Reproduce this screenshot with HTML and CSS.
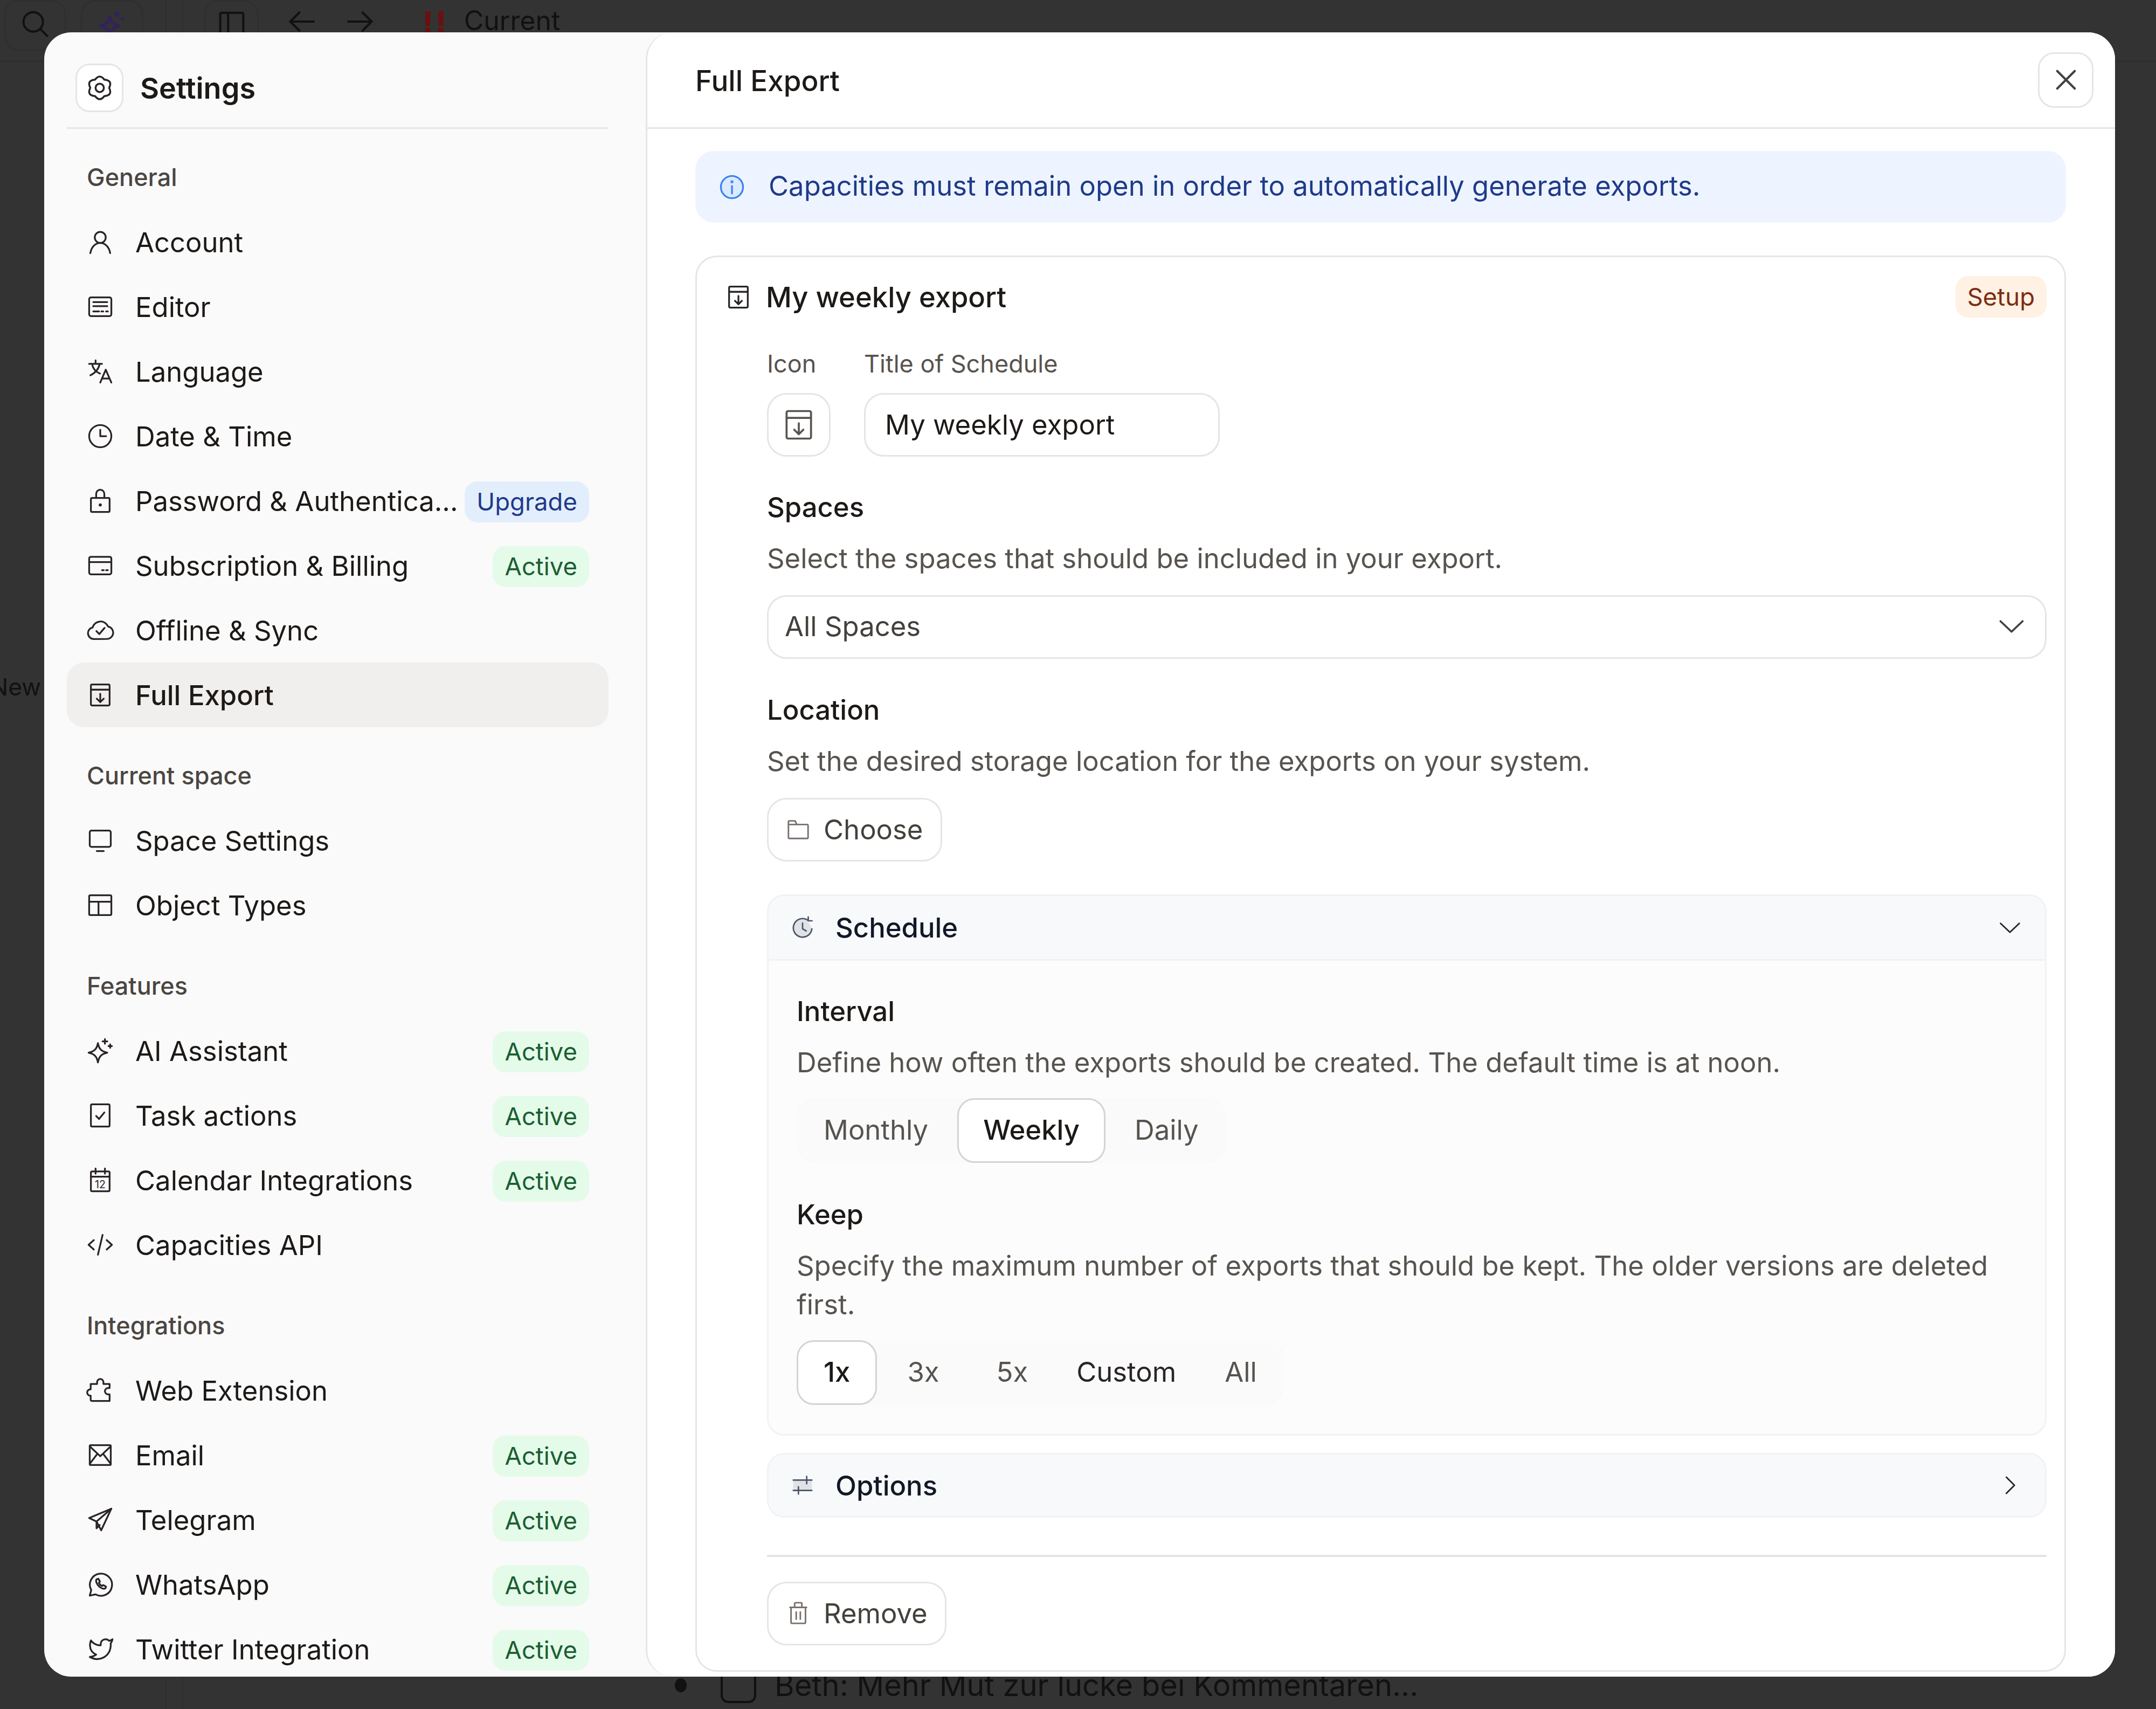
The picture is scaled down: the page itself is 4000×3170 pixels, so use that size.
FILE: index.html
```html
<!DOCTYPE html>
<html lang="en">
<head>
  <meta charset="UTF-8">
  <title>Settings - Full Export</title>
  <link rel="stylesheet" href="styles.css">
</head>
<body>

  <svg class="icon-defs" aria-hidden="true">
    <symbol id="i-gear" viewBox="0 0 24 24"><path d="M8.250 5.500Q12 .5 15.750 5.500Q22.400 6 19.500 12Q22.400 18 15.750 18.500Q12 23.500 8.250 18.500Q1.600 18 4.500 12Q1.600 6 8.250 5.500Z"/><circle cx="12" cy="12" r="3.300"/></symbol>
    <symbol id="i-user" viewBox="0 0 24 24"><circle cx="12" cy="8" r="4.700"/><path d="M3.500 21.500c.8-4.800 4-8.800 8.500-8.800s7.700 4 8.500 8.800"/></symbol>
    <symbol id="i-editor" viewBox="0 0 24 24"><rect x="2.500" y="4" width="19" height="16" rx="1.500"/><path d="M6 8h12M6 11.500h12M6 16h5M13 16h1.500M17 16h1.500"/></symbol>
    <symbol id="i-lang" viewBox="0 0 24 24"><path d="M2.500 5.500h11M8 2.500v3M5 5.500c.6 3.800 3.200 6.800 6.800 8.300M11.500 5.500c-.8 4.200-3.600 7.700-8 9.800M12 21.500l4.700-11 4.800 11M13.600 18h6.300"/></symbol>
    <symbol id="i-clock" viewBox="0 0 24 24"><circle cx="12" cy="12" r="9.500"/><path d="M12 6.500V12h5"/></symbol>
    <symbol id="i-lock" viewBox="0 0 24 24"><rect x="4" y="9.500" width="16" height="12" rx="1"/><path d="M8.500 9.500V6a3.500 3.500 0 0 1 7 0v3.500"/><circle cx="12" cy="15.500" r=".6"/></symbol>
    <symbol id="i-card" viewBox="0 0 24 24"><rect x="2.500" y="4.500" width="19" height="15" rx="1.500"/><path d="M2.500 9h19M13.500 16h1.500M17 16h1.500"/></symbol>
    <symbol id="i-cloud" viewBox="0 0 24 24"><path d="M6.500 19.500a5 5 0 0 1-1-9.900 7 7 0 0 1 13.200-.8 5.400 5.400 0 0 1-1 10.700Z"/><path d="M8.700 12.700l2.500 2.600 4.500-5.300"/></symbol>
    <symbol id="i-archive" viewBox="0 0 24 24"><path d="M4 7.500h16V20a1 1 0 0 1-1 1H5a1 1 0 0 1-1-1Z"/><path d="M5 3h14a1 1 0 0 1 1 1v3.500H4V4a1 1 0 0 1 1-1Z"/><path d="M12 11v7M9 15.200l3 3 3-3"/></symbol>
    <symbol id="i-monitor" viewBox="0 0 24 24"><rect x="3" y="3.500" width="18" height="14" rx="1.500"/><path d="M9 21h6"/></symbol>
    <symbol id="i-table" viewBox="0 0 24 24"><rect x="2.500" y="3.500" width="19" height="17" rx="1"/><path d="M2.500 9h19M10.500 9v11.500"/></symbol>
    <symbol id="i-spark" viewBox="0 0 24 24"><path d="M10 5.500c.9 4.900 3 7.200 8 8.200-5 1-7.100 3.300-8 8.300-.9-5-3-7.300-8-8.300 5-1 7.100-3.300 8-8.200Z"/><path d="M16 2v4M14 4h4M20.500 6.500v3M19 8h3"/></symbol>
    <symbol id="i-check" viewBox="0 0 24 24"><rect x="4" y="2.500" width="16" height="19" rx="1"/><path d="M8.500 12.500l2.500 2.500 4.500-5.500"/></symbol>
    <symbol id="i-calendar" viewBox="0 0 24 24"><rect x="4" y="4.500" width="16" height="17" rx="1"/><path d="M4 9h16M8 2v4.500M16 2v4.500"/></symbol>
    <symbol id="i-code" viewBox="0 0 24 24"><path d="M6.500 8L2 12l4.500 4M17.500 8l4.500 4-4.500 4M14 3.500l-4 17"/></symbol>
    <symbol id="i-puzzle" viewBox="0 0 24 24"><path d="M9.300 6.500V5a2.700 2.700 0 0 1 5.400 0v1.500H20V10h-1.300a2.700 2.700 0 0 0 0 5.400H20V21H4.800a1 1 0 0 1-1-1v-3.500H3.500a2.700 2.700 0 0 1 0-5.400h.3V6.500Z"/></symbol>
    <symbol id="i-mail" viewBox="0 0 24 24"><rect x="3" y="3.500" width="18" height="17" rx=".8"/><path d="M3 4.500l9 8.500 9-8.500M3 19.500l6.500-8.500M21 19.500L14.500 11"/></symbol>
    <symbol id="i-plane" viewBox="0 0 24 24"><path d="M21.500 2.500L2.500 10.500l6.300 3L12.800 21Z"/><path d="M21.500 2.500L8.800 13.500v5.800l2.700-2.800"/></symbol>
    <symbol id="i-whatsapp" viewBox="0 0 24 24"><path d="M3 21.500l1.300-4.700A9.500 9.500 0 1 1 8 20.500Z"/><path d="M9 7.500c-1.200 1-.3 3.900 1.700 5.900s4.700 2.900 5.800 1.800l.4-1.400-2.300-1.300-1.200.8c-1.100-.5-2-1.500-2.600-2.700l.9-1.100-1.300-2.400Z"/></symbol>
    <symbol id="i-twitter" viewBox="0 0 24 24"><path d="M22.500 3.500a10 10 0 0 1-2.800 1.400 4.200 4.200 0 0 0-7.300 2.800v1A10 10 0 0 1 4 4.500s-3.500 8.500 4.500 12.200a10.500 10.500 0 0 1-5.500 2c8 4.500 18 0 18-10.800a4 4 0 0 0-.1-.8 7 7 0 0 0 1.600-3.600Z"/></symbol>
    <symbol id="i-info" viewBox="0 0 24 24"><circle cx="12" cy="12" r="9.500"/><path d="M12 11v6.500"/><circle cx="12" cy="7.500" r=".5"/></symbol>
    <symbol id="i-close" viewBox="0 0 24 24"><path d="M4.500 4.500l15 15M19.500 4.500l-15 15"/></symbol>
    <symbol id="i-down" viewBox="0 0 24 24"><path d="M2.500 7.500L12 16.500l9.500-9"/></symbol>
    <symbol id="i-right" viewBox="0 0 24 24"><path d="M8 3l9 9-9 9"/></symbol>
    <symbol id="i-folder" viewBox="0 0 24 24"><path d="M2.500 5a1 1 0 0 1 1-1h5.500l1.500 3.500h10a1 1 0 0 1 1 1V20a1 1 0 0 1-1 1h-17a1 1 0 0 1-1-1Z"/><path d="M2.500 7.500h8"/></symbol>
    <symbol id="i-schedule" viewBox="0 0 24 24"><path class="soft" d="M20.500 12A9 9 0 1 1 17 4.900Z"/><path d="M21 13a9 9 0 1 1-4-8.500"/><path d="M17.500 1.500v3.700h3.700M12 7.500V13l3.500 2"/></symbol>
    <symbol id="i-sliders" viewBox="0 0 24 24"><rect class="soft" x="3" y="7" width="18" height="10"/><path d="M3 7h18M16 3.500v7M3 17h18M8 13.500v7"/></symbol>
    <symbol id="i-trash" viewBox="0 0 24 24"><path d="M5 6.500h14V21a1 1 0 0 1-1 1H6a1 1 0 0 1-1-1Z"/><path d="M4 6.500h16M8.500 6.500V3a1 1 0 0 1 1-1h5a1 1 0 0 1 1 1v3.500M10 11v7M14 11v7"/></symbol>
    <symbol id="i-search" viewBox="0 0 24 24"><circle cx="10.500" cy="10.500" r="8"/><path d="M16.500 16.500l6 6"/></symbol>
    <symbol id="i-panel" viewBox="0 0 24 24"><rect x="2.500" y="3" width="19" height="18" rx="1"/><path d="M9 3v18"/></symbol>
    <symbol id="i-back" viewBox="0 0 24 24"><path d="M22 12H2M10 4l-8 8 8 8"/></symbol>
    <symbol id="i-forward" viewBox="0 0 24 24"><path d="M2 12h20M14 4l8 8-8 8"/></symbol>
  </svg>

  <!-- app behind the dialog -->
  <div class="backdrop">
    <header class="back-toolbar">
      <div class="back-tool back-tool-search"><svg class="back-icon"><use href="#i-search"/></svg></div>
      <div class="back-tool back-tool-spark"><svg class="back-icon back-icon-purple"><use href="#i-spark"/></svg></div>
      <div class="back-sep"></div>
      <div class="back-tool back-tool-panel"><svg class="back-icon"><use href="#i-panel"/></svg></div>
      <svg class="back-icon back-arrow"><use href="#i-back"/></svg>
      <svg class="back-icon back-arrow"><use href="#i-forward"/></svg>
      <span class="back-marks">!!</span>
      <span class="back-title">Current</span>
    </header>
    <div class="back-body">
      <aside class="back-rail"><span class="back-new">New</span></aside>
      <div class="back-gutter"></div>
      <div class="back-content">
        <div class="back-task">
          <span class="back-dot"></span>
          <span class="back-box"></span>
          <span class="back-text">Beth: Mehr Mut zur lücke bei Kommentaren...</span>
        </div>
      </div>
    </div>
  </div>

  <div class="modal">
    <aside class="sidebar">
      <div class="side-head">
        <span class="side-head-btn"><svg class="icon icon-gear"><use href="#i-gear"/></svg></span>
        <span class="side-head-title">Settings</span>
      </div>

      <section class="nav-section">
        <div class="nav-label">General</div>
        <div class="nav-item"><svg class="icon"><use href="#i-user"/></svg><span class="nav-text">Account</span></div>
        <div class="nav-item"><svg class="icon"><use href="#i-editor"/></svg><span class="nav-text">Editor</span></div>
        <div class="nav-item"><svg class="icon"><use href="#i-lang"/></svg><span class="nav-text">Language</span></div>
        <div class="nav-item"><svg class="icon"><use href="#i-clock"/></svg><span class="nav-text">Date &amp; Time</span></div>
        <div class="nav-item"><svg class="icon"><use href="#i-lock"/></svg><span class="nav-text">Password &amp; Authentica...</span><span class="badge badge-blue">Upgrade</span></div>
        <div class="nav-item"><svg class="icon"><use href="#i-card"/></svg><span class="nav-text">Subscription &amp; Billing</span><span class="badge badge-green">Active</span></div>
        <div class="nav-item"><svg class="icon"><use href="#i-cloud"/></svg><span class="nav-text">Offline &amp; Sync</span></div>
        <div class="nav-item nav-item-active"><svg class="icon"><use href="#i-archive"/></svg><span class="nav-text">Full Export</span></div>
      </section>

      <section class="nav-section">
        <div class="nav-label">Current space</div>
        <div class="nav-item"><svg class="icon"><use href="#i-monitor"/></svg><span class="nav-text">Space Settings</span></div>
        <div class="nav-item"><svg class="icon"><use href="#i-table"/></svg><span class="nav-text">Object Types</span></div>
      </section>

      <section class="nav-section">
        <div class="nav-label">Features</div>
        <div class="nav-item"><svg class="icon"><use href="#i-spark"/></svg><span class="nav-text">AI Assistant</span><span class="badge badge-green">Active</span></div>
        <div class="nav-item"><svg class="icon"><use href="#i-check"/></svg><span class="nav-text">Task actions</span><span class="badge badge-green">Active</span></div>
        <div class="nav-item">
          <svg class="icon" viewBox="0 0 24 24"><use href="#i-calendar"/><text class="cal-day" x="12" y="18.800">12</text></svg>
          <span class="nav-text">Calendar Integrations</span><span class="badge badge-green">Active</span>
        </div>
        <div class="nav-item"><svg class="icon"><use href="#i-code"/></svg><span class="nav-text">Capacities API</span></div>
      </section>

      <section class="nav-section">
        <div class="nav-label">Integrations</div>
        <div class="nav-item"><svg class="icon"><use href="#i-puzzle"/></svg><span class="nav-text">Web Extension</span></div>
        <div class="nav-item"><svg class="icon"><use href="#i-mail"/></svg><span class="nav-text">Email</span><span class="badge badge-green">Active</span></div>
        <div class="nav-item"><svg class="icon"><use href="#i-plane"/></svg><span class="nav-text">Telegram</span><span class="badge badge-green">Active</span></div>
        <div class="nav-item"><svg class="icon"><use href="#i-whatsapp"/></svg><span class="nav-text">WhatsApp</span><span class="badge badge-green">Active</span></div>
        <div class="nav-item"><svg class="icon"><use href="#i-twitter"/></svg><span class="nav-text">Twitter Integration</span><span class="badge badge-green">Active</span></div>
      </section>
    </aside>

    <main class="panel">
      <header class="panel-head">
        <h1 class="panel-title">Full Export</h1>
        <button class="close-btn"><svg class="icon icon-close"><use href="#i-close"/></svg></button>
      </header>

      <div class="panel-body">
        <div class="notice">
          <svg class="icon icon-info"><use href="#i-info"/></svg>
          <span class="notice-text">Capacities must remain open in order to automatically generate exports.</span>
        </div>

        <div class="card">
          <div class="card-head">
            <svg class="icon"><use href="#i-archive"/></svg>
            <span class="card-title">My weekly export</span>
            <span class="badge badge-orange">Setup</span>
          </div>

          <div class="card-content">
            <div class="fields">
              <div class="field">
                <div class="field-label">Icon</div>
                <button class="icon-btn"><svg class="icon icon-muted"><use href="#i-archive"/></svg></button>
              </div>
              <div class="field">
                <div class="field-label">Title of Schedule</div>
                <div class="text-input">My weekly export</div>
              </div>
            </div>

            <h2 class="group-title group-spaces">Spaces</h2>
            <p class="group-desc">Select the spaces that should be included in your export.</p>
            <div class="select">
              <span>All Spaces</span>
              <svg class="icon icon-chevron"><use href="#i-down"/></svg>
            </div>

            <h2 class="group-title group-location">Location</h2>
            <p class="group-desc">Set the desired storage location for the exports on your system.</p>
            <button class="btn"><svg class="icon icon-small"><use href="#i-folder"/></svg>Choose</button>

            <div class="fold fold-schedule">
              <div class="fold-head fold-head-open">
                <svg class="icon icon-fold"><use href="#i-schedule"/></svg>
                <span class="fold-title">Schedule</span>
                <svg class="icon icon-chevron-thin"><use href="#i-down"/></svg>
              </div>
              <div class="fold-body">
                <h2 class="group-title">Interval</h2>
                <p class="group-desc">Define how often the exports should be created. The default time is at noon.</p>
                <div class="segments">
                  <span class="segment">Monthly</span>
                  <span class="segment segment-on segment-narrow">Weekly</span>
                  <span class="segment">Daily</span>
                </div>

                <h2 class="group-title group-keep">Keep</h2>
                <p class="group-desc">Specify the maximum number of exports that should be kept. The older versions are deleted first.</p>
                <div class="segments segments-loose">
                  <span class="segment segment-on">1x</span>
                  <span class="segment">3x</span>
                  <span class="segment">5x</span>
                  <span class="segment segment-custom">Custom</span>
                  <span class="segment">All</span>
                </div>
              </div>
            </div>

            <div class="fold fold-options">
              <div class="fold-head fold-head-closed">
                <svg class="icon icon-fold"><use href="#i-sliders"/></svg>
                <span class="fold-title">Options</span>
                <svg class="icon icon-chevron-right"><use href="#i-right"/></svg>
              </div>
            </div>

            <hr class="card-rule">
            <button class="btn"><svg class="icon icon-small"><use href="#i-trash"/></svg>Remove</button>
          </div>
        </div>
      </div>
    </main>
  </div>

</body>
</html>
```

FILE: styles.css
```css
* {
  box-sizing: border-box;
}

html, body {
  margin: 0;
  width: 4000px;
  height: 3170px;
  overflow: hidden;
}

body {
  position: relative;
  background: #333333;
  color: #1c1917;
  font-family: Inter, "Liberation Sans", sans-serif;
  font-size: 50.800px;
}

.icon-defs {
  display: none;
}

.icon {
  width: 52px;
  height: 52px;
  flex: none;
  fill: none;
  stroke: #292524;
  stroke-width: 1.500;
  stroke-linecap: round;
  stroke-linejoin: round;
}

/* app behind the dialog */
.backdrop {
  display: flex;
  flex-direction: column;
  height: 100%;
  color: #111;
}

.back-toolbar {
  display: flex;
  align-items: flex-start;
  height: 115px;
  border-bottom: 3px solid #2e2e2e;
}

.back-tool {
  display: flex;
  justify-content: center;
  padding-top: 14px;
  height: 94px;
  border: 3px solid #2f2f2f;
  border-radius: 26px;
}

.back-tool-search {
  width: 114px;
  margin-left: 8px;
}

.back-tool-spark {
  width: 116px;
  margin-left: 28px;
}

.back-tool-panel {
  width: 101px;
  margin-left: 39px;
}

.back-sep {
  width: 34px;
  height: 94px;
  margin-left: 40px;
  border-left: 3px solid #2f2f2f;
  border-right: 3px solid #2f2f2f;
}

.back-icon {
  width: 54px;
  height: 54px;
  flex: none;
  fill: none;
  stroke: #111;
  stroke-width: 1.800;
}

.back-icon-purple {
  stroke: #33215e;
  stroke-width: 2.200;
}

.back-arrow {
  margin-top: 13px;
  margin-left: 54px;
}

.back-arrow + .back-arrow {
  margin-left: 52px;
}

.back-marks {
  margin-left: 90px;
  margin-top: 8px;
  color: #6d0f0f;
  font-size: 54px;
  font-weight: 800;
  letter-spacing: 5px;
}

.back-title {
  margin-left: 28px;
  margin-top: 8px;
  font-size: 50px;
}

.back-body {
  display: flex;
  flex: 1;
}

.back-rail {
  width: 306px;
  padding-top: 1132px;
  overflow: hidden;
}

.back-new {
  display: block;
  margin-left: -18px;
  font-size: 44px;
}

.back-gutter {
  width: 34px;
  border-left: 3px solid #2f2f2f;
  border-right: 3px solid #2f2f2f;
}

.back-content {
  display: flex;
  flex: 1;
  flex-direction: column;
  justify-content: flex-end;
  padding: 0 0 10px 912px;
}

.back-task {
  display: flex;
  align-items: center;
}

.back-dot {
  width: 22px;
  height: 26px;
  border-radius: 50%;
  background: #111;
}

.back-box {
  width: 66px;
  height: 66px;
  margin-left: 63px;
  border: 4px solid #111;
  border-radius: 14px;
}

.back-text {
  margin-left: 34px;
  font-size: 56px;
}

/* dialog */
.modal {
  position: absolute;
  left: 82px;
  top: 60px;
  display: flex;
  width: 3842px;
  height: 3050px;
  border-radius: 50px;
  overflow: hidden;
  background: #fafafa;
}

.sidebar {
  width: 1116px;
  flex: none;
  padding: 0 69px 0 42px;
}

.side-head {
  display: flex;
  align-items: center;
  gap: 31px;
  height: 179px;
  padding: 30px 0 0 16px;
  border-bottom: 3px solid #e7e5e4;
}

.side-head-btn {
  display: flex;
  align-items: center;
  justify-content: center;
  width: 89px;
  height: 90px;
  background: #fff;
  border: 3px solid #e7e5e4;
  border-radius: 26px;
}

.icon-gear {
  width: 56px;
  height: 56px;
}

.side-head-title {
  font-size: 54px;
  font-weight: 600;
}

.nav-section {
  margin-top: 30px;
}

.nav-label {
  height: 120px;
  padding-left: 37px;
  line-height: 120px;
  color: #4a4642;
  font-size: 45px;
  font-weight: 500;
}

.nav-item {
  display: flex;
  align-items: center;
  height: 120px;
  padding: 0 36px 0 36px;
  border-radius: 32px;
}

.nav-item-active {
  background: #f0efed;
  font-weight: 500;
}

.nav-text {
  flex: 1;
  margin-left: 39px;
  white-space: nowrap;
}

.cal-day {
  fill: #292524;
  stroke: none;
  font-size: 9px;
  text-anchor: middle;
}

.badge {
  height: 76px;
  margin-top: 3px;
  padding: 0 22px;
  border-radius: 24px;
  line-height: 76px;
  font-size: 45.500px;
}

.badge-green {
  background: #e4fbe9;
  color: #1b5e33;
}

.badge-blue {
  background: #e3eefd;
  color: #1e3a8a;
}

.badge-orange {
  height: 77px;
  margin-top: 0;
  background: #fff1e3;
  color: #7c2d12;
  line-height: 77px;
}

.panel {
  flex: 1;
  background: #fff;
  border-left: 3px solid #e7e5e4;
  border-radius: 50px 0 0 50px;
}

.panel-head {
  display: flex;
  align-items: center;
  justify-content: space-between;
  height: 179px;
  padding: 0 40px 0 89px;
  border-bottom: 3px solid #e7e5e4;
}

.panel-title {
  margin: 4px 0 0;
  font-size: 53px;
  font-weight: 500;
}

.close-btn {
  display: flex;
  align-items: center;
  justify-content: center;
  width: 103px;
  height: 103px;
  padding: 0;
  background: #fff;
  border: 3px solid #e7e5e4;
  border-radius: 30px;
}

.icon-close {
  stroke: #44403c;
  stroke-width: 1.900;
}

.panel-body {
  padding: 41px 91px 0 89px;
}

.notice {
  display: flex;
  align-items: center;
  gap: 42px;
  height: 133px;
  padding-left: 42px;
  background: #eef4ff;
  border-radius: 34px;
  color: #1e3a8a;
}

.notice-text {
  margin-bottom: 4px;
}

.icon-info {
  fill: #dbeafe;
  stroke: #3b82f6;
}

.card {
  height: 2627px;
  margin-top: 61px;
  padding: 35px 33px 0 51px;
  background: #fff;
  border: 3px solid #e7e5e4;
  border-radius: 40px;
}

.card-head {
  display: flex;
  align-items: center;
  height: 77px;
}

.card-title {
  flex: 1;
  margin-left: 25px;
  font-size: 52.500px;
  font-weight: 500;
}

.card-content {
  padding-left: 79px;
}

.fields {
  display: flex;
  gap: 62px;
  margin-top: 56px;
}

.field-label {
  height: 60px;
  margin-bottom: 24px;
  line-height: 60px;
  color: #57534e;
  font-size: 45px;
}

.icon-btn {
  display: flex;
  align-items: center;
  justify-content: center;
  width: 118px;
  height: 118px;
  padding: 0;
  background: #fff;
  border: 3px solid #e7e5e4;
  border-radius: 36px;
}

.icon-muted {
  width: 68px;
  height: 68px;
  stroke: #57534e;
  stroke-width: 1.300;
}

.text-input {
  width: 660px;
  height: 118px;
  padding-left: 36px;
  border: 3px solid #e7e5e4;
  border-radius: 36px;
  line-height: 112px;
}

.group-title {
  margin: 0 0 29px;
  line-height: 60px;
  font-size: 50.800px;
  font-weight: 500;
}

.group-spaces {
  margin-top: 64px;
}

.group-location {
  margin-top: 65px;
}

.group-keep {
  margin-top: 66px;
}

.group-desc {
  margin: 0;
  line-height: 72px;
  color: #57534e;
}

.select {
  display: flex;
  align-items: center;
  justify-content: space-between;
  height: 118px;
  margin-top: 32px;
  padding: 0 36px 3px 30px;
  border: 3px solid #e7e5e4;
  border-radius: 36px;
  color: #44403c;
}

.icon-chevron {
  stroke: #44403c;
  stroke-width: 1.700;
}

.btn {
  display: flex;
  align-items: center;
  gap: 24px;
  height: 118px;
  margin-top: 32px;
  padding: 0 32px 2px;
  background: #fff;
  border: 3px solid #e7e5e4;
  border-radius: 36px;
  color: #44403c;
  font-family: inherit;
  font-size: 50.800px;
}

.icon-small {
  width: 46px;
  height: 46px;
  stroke: #78716c;
}

.fold {
  border: 3px solid #f2f2f4;
  border-radius: 32px;
  overflow: hidden;
}

.fold-schedule {
  margin-top: 61px;
}

.fold-options {
  margin-top: 32px;
}

.fold-head {
  display: flex;
  align-items: center;
  height: 120px;
  padding: 0 43px 0 40px;
  background: #f8f9fb;
}

.fold-head-open {
  border-bottom: 3px solid #f2f2f4;
}

.fold-head-closed {
  height: 114px;
  padding-right: 45px;
}

.fold-title {
  flex: 1;
  margin-left: 38px;
  color: #111827;
  font-weight: 500;
}

.icon-fold {
  width: 46px;
  height: 46px;
  stroke: #4b5563;
  stroke-width: 1.400;
}

.soft {
  fill: #dfe2e7;
  stroke: none;
}

.icon-chevron-thin {
  width: 44px;
  height: 44px;
  stroke: #292524;
  stroke-width: 1.500;
}

.icon-chevron-right {
  width: 40px;
  height: 40px;
  stroke: #292524;
  stroke-width: 1.700;
}

.fold-body {
  height: 878px;
  padding: 64px 52px 0;
  background: #fcfcfd;
}

.segments {
  display: inline-flex;
  gap: 4px;
  margin-top: 30px;
  background: #fafafa;
  border-radius: 32px;
}

.segments-loose {
  gap: 6px;
}

.segment {
  height: 120px;
  padding: 0 47px;
  border: 3px solid transparent;
  line-height: 112px;
  color: #57534e;
}

.segment-on {
  background: #fff;
  border-color: #d6d3d1;
  border-radius: 32px;
  color: #1c1917;
  font-weight: 500;
}

.segment-narrow {
  padding: 0 45px;
}

.segment-custom {
  padding: 0 31px;
  color: #292524;
}

.card-rule {
  height: 4px;
  margin: 69px 0 46px;
  border: 0;
  background: #e7e5e4;
}
```
